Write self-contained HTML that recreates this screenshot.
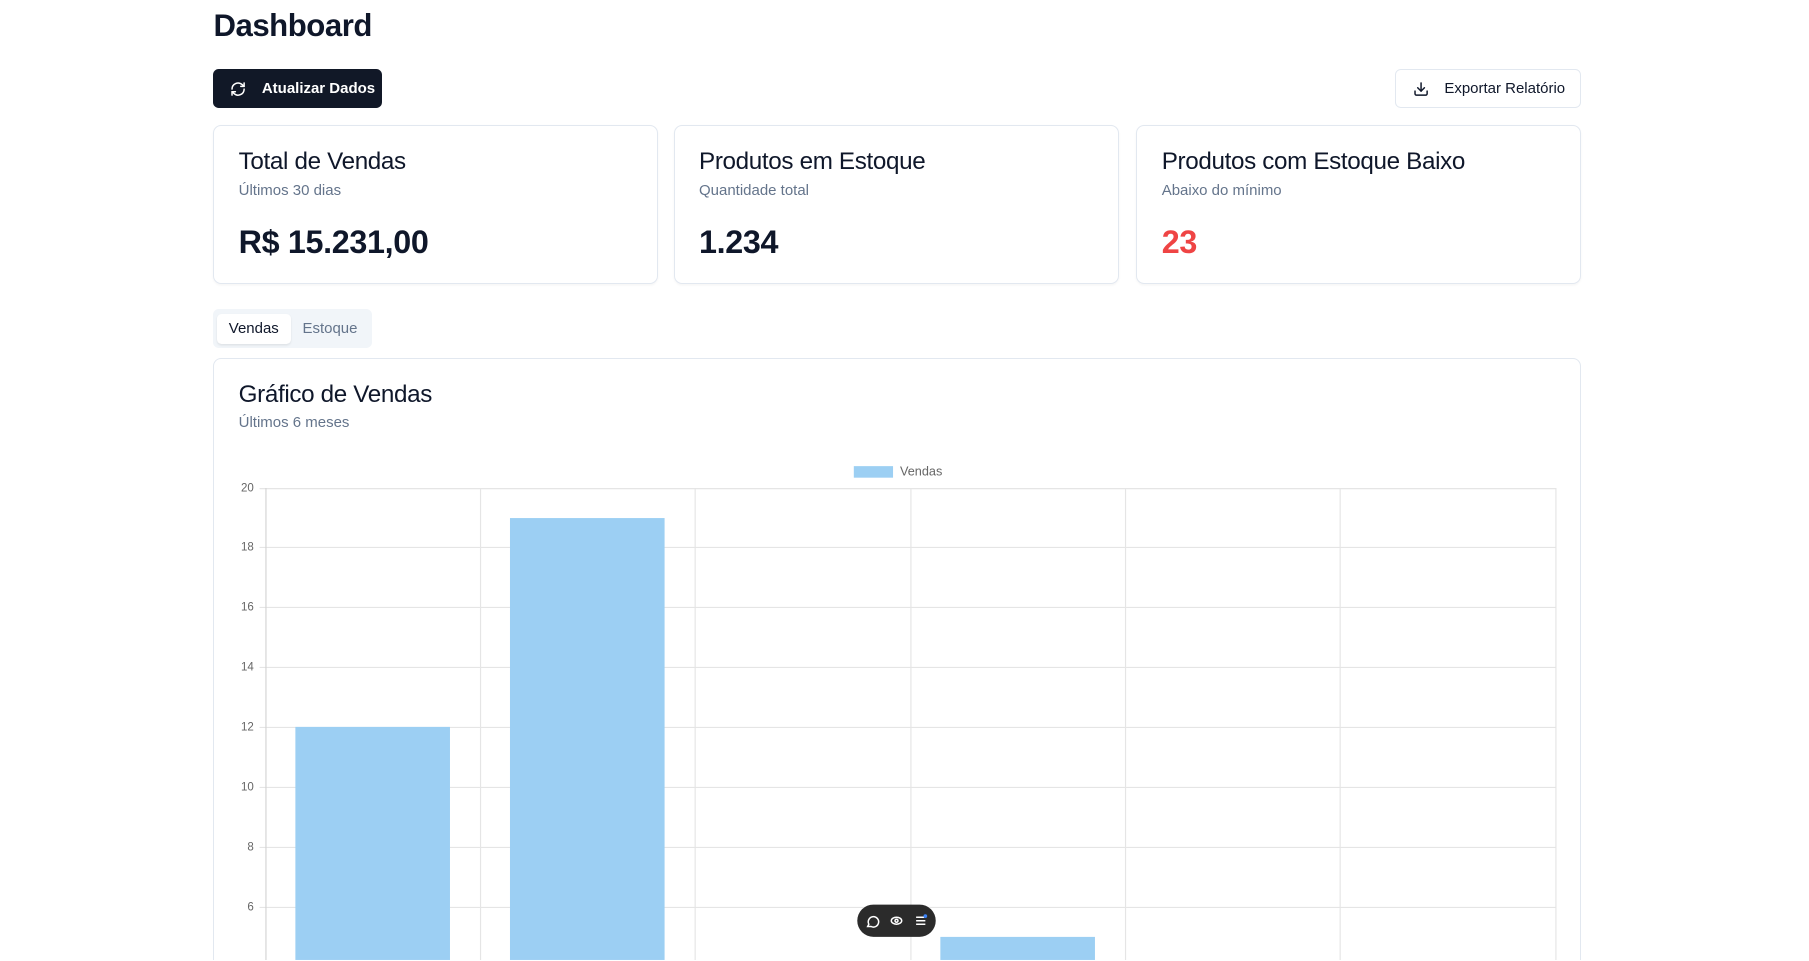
<!DOCTYPE html>
<html><head><meta charset="utf-8"><style>
html,body{margin:0;padding:0;background:#fff;overflow:hidden}
body{zoom:1.1538;width:1568px;height:832px;position:relative;font-family:"Liberation Sans",sans-serif;color:#0f172a}
.abs{position:absolute}
h1{position:absolute;left:185px;top:7px;margin:0;font-size:27px;font-weight:700;letter-spacing:-0.4px}
.btn{position:absolute;top:60px;height:34px;border-radius:5px;display:flex;align-items:center;font-size:13px;box-sizing:border-box;white-space:nowrap}
.b1{left:185px;width:146px;background:#111827;color:#fff;font-weight:700;padding-left:14px}
.b2{left:1209px;width:161px;border:1px solid #e2e8f0;background:#fff;color:#0f172a;padding-left:15px}
.card{position:absolute;top:108px;height:138px;width:385px;border:1px solid #e2e8f0;border-radius:7px;box-sizing:border-box;box-shadow:0 1px 2px rgba(0,0,0,.04)}
.ct{position:absolute;left:21px;top:19px;font-size:21px;letter-spacing:-0.3px;white-space:nowrap}
.cs{position:absolute;left:21px;top:49px;font-size:13px;color:#64748b;white-space:nowrap}
.cv{position:absolute;left:21px;top:85px;font-size:28px;font-weight:700;letter-spacing:-0.3px}
.tabs{position:absolute;left:185px;top:268px;width:137px;height:34px;background:#f1f5f9;border-radius:5px}
.tab{position:absolute;top:4px;height:26px;line-height:26px;font-size:13px;text-align:center;border-radius:4px}
.big{position:absolute;left:185px;top:310px;width:1185px;height:522px;border:1px solid #e2e8f0;border-bottom:none;border-radius:7px 7px 0 0;box-sizing:border-box}
</style></head><body>
<h1>Dashboard</h1>
<div class="btn b1"><svg width="14" height="14" viewBox="0 0 24 24" fill="none" stroke="#fff" stroke-width="2.2" stroke-linecap="round" stroke-linejoin="round"><path d="M3 12a9 9 0 0 1 15-6.7L21 8"/><path d="M21 3v5h-5"/><path d="M21 12a9 9 0 0 1-15 6.7L3 16"/><path d="M8 16H3v5"/></svg><span style="margin-left:14px">Atualizar Dados</span></div>
<div class="btn b2"><svg width="14" height="14" viewBox="0 0 24 24" fill="none" stroke="#0f172a" stroke-width="2.2" stroke-linecap="round" stroke-linejoin="round"><path d="M21 15v4a2 2 0 0 1-2 2H5a2 2 0 0 1-2-2v-4"/><path d="M7 10l5 5 5-5"/><path d="M12 15V3"/></svg><span style="margin-left:13px">Exportar Relatório</span></div>
<div class="card" style="left:185px"><div class="ct">Total de Vendas</div><div class="cs">Últimos 30 dias</div><div class="cv">R$ 15.231,00</div></div>
<div class="card" style="left:584px;width:386px"><div class="ct">Produtos em Estoque</div><div class="cs">Quantidade total</div><div class="cv">1.234</div></div>
<div class="card" style="left:985px"><div class="ct">Produtos com Estoque Baixo</div><div class="cs">Abaixo do mínimo</div><div class="cv" style="color:#ef4444">23</div></div>
<div class="tabs"><div class="tab" style="left:3px;width:64px;background:#fff;box-shadow:0 1px 2px rgba(0,0,0,.08)">Vendas</div><div class="tab" style="left:70px;width:62px;color:#64748b">Estoque</div></div>
<div class="big"><div class="ct" style="top:19px">Gráfico de Vendas</div><div class="cs" style="top:48px">Últimos 6 meses</div></div>
<svg class="abs" style="left:0;top:0" width="1568" height="832" font-family="Liberation Sans, sans-serif" font-size="10" fill="#666">
<rect x="740" y="404" width="34" height="10" fill="#9ccff3"/><text x="780" y="412" font-size="11">Vendas</text>
<g stroke="#e5e5e5" stroke-width="1">
<line x1="225" y1="423.5" x2="1349" y2="423.5"/><line x1="225" y1="474.5" x2="1349" y2="474.5"/><line x1="225" y1="526.5" x2="1349" y2="526.5"/><line x1="225" y1="578.5" x2="1349" y2="578.5"/><line x1="225" y1="630.5" x2="1349" y2="630.5"/><line x1="225" y1="682.5" x2="1349" y2="682.5"/><line x1="225" y1="734.5" x2="1349" y2="734.5"/><line x1="225" y1="786.5" x2="1349" y2="786.5"/>
<line x1="416.5" y1="423" x2="416.5" y2="832"/><line x1="602.5" y1="423" x2="602.5" y2="832"/><line x1="789.5" y1="423" x2="789.5" y2="832"/><line x1="975.5" y1="423" x2="975.5" y2="832"/><line x1="1161.5" y1="423" x2="1161.5" y2="832"/><line x1="1348.5" y1="423" x2="1348.5" y2="832"/>
</g>
<line x1="230.5" y1="423" x2="230.5" y2="832" stroke="#d4d4d4"/>
<g text-anchor="end"><text x="220" y="426">20</text><text x="220" y="477">18</text><text x="220" y="529">16</text><text x="220" y="581">14</text><text x="220" y="633">12</text><text x="220" y="685">10</text><text x="220" y="737">8</text><text x="220" y="789">6</text></g>
<rect x="256" y="630" width="134" height="202" fill="#9ccff3"/>
<rect x="442" y="449" width="134" height="383" fill="#9ccff3"/>
<rect x="815" y="812" width="134" height="20" fill="#9ccff3"/>
<rect x="743" y="784" width="68" height="28" rx="14" fill="#2b2b2b"/>
<g stroke="#fff" stroke-width="1.3" fill="none"><path d="M752 803l1-2a4.5 4.5 0 1 1 2 2z"/><ellipse cx="777" cy="798" rx="4.5" ry="3"/><circle cx="777" cy="798" r="1.3"/><path d="M794 795h7M794 798h8M794 801h8"/></g>
<circle cx="802" cy="794" r="1.6" fill="#3b82f6"/>
</svg>
</body></html>
